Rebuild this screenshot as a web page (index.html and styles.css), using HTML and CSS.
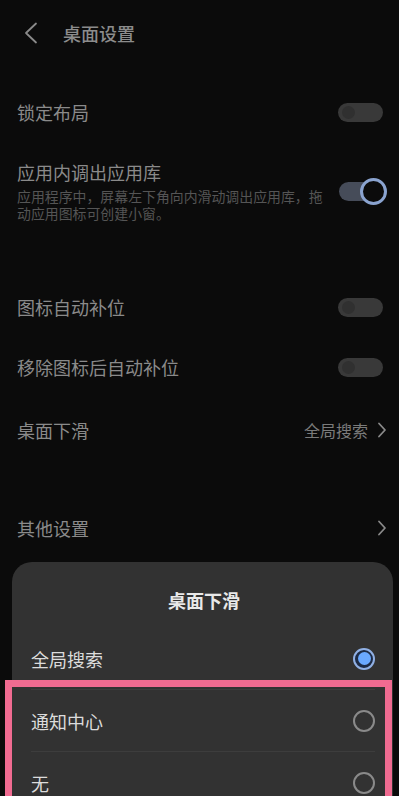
FILE: index.html
```html
<!DOCTYPE html>
<html lang="zh-CN">
<head>
<meta charset="utf-8">
<title>桌面设置</title>
<link rel="stylesheet" href="styles.css">
</head>
<body>
<div class="screen">
  <header class="header">
    <svg class="back" width="14" height="22" viewBox="0 0 14 22"><path d="M12 1.5 L2 11 L12 20.5" fill="none" stroke="#8a8a8a" stroke-width="1.8" stroke-linecap="round" stroke-linejoin="round"/></svg>
    <span class="header-title">桌面设置</span>
  </header>

  <div class="row row-lock">
    <span class="label">锁定布局</span>
    <span class="toggle"><span class="knob"></span></span>
  </div>

  <div class="row row-app">
    <div class="text-block">
      <div class="label">应用内调出应用库</div>
      <div class="desc">应用程序中，屏幕左下角向内滑动调出应用库，拖</div>
      <div class="desc">动应用图标可创建小窗。</div>
    </div>
    <span class="toggle on"><span class="knob"></span></span>
  </div>

  <div class="row row-icon">
    <span class="label">图标自动补位</span>
    <span class="toggle"><span class="knob"></span></span>
  </div>

  <div class="row row-remove">
    <span class="label">移除图标后自动补位</span>
    <span class="toggle"><span class="knob"></span></span>
  </div>

  <div class="row row-swipe">
    <span class="label">桌面下滑</span>
    <span class="value">全局搜索
      <svg class="chev" width="10" height="16" viewBox="0 0 10 16"><path d="M2 1.5 L8 8 L2 14.5" fill="none" stroke="#8a8a8a" stroke-width="1.8" stroke-linecap="round" stroke-linejoin="round"/></svg>
    </span>
  </div>

  <div class="row row-other">
    <span class="label">其他设置</span>
    <svg class="chev" width="10" height="16" viewBox="0 0 10 16"><path d="M2 1.5 L8 8 L2 14.5" fill="none" stroke="#8a8a8a" stroke-width="1.8" stroke-linecap="round" stroke-linejoin="round"/></svg>
  </div>

  <div class="sheet">
    <div class="sheet-title">桌面下滑</div>
    <div class="option">
      <span class="opt-label">全局搜索</span>
      <span class="radio checked"><span class="dot"></span></span>
    </div>
    <div class="divider"></div>
    <div class="option">
      <span class="opt-label">通知中心</span>
      <span class="radio"></span>
    </div>
    <div class="divider"></div>
    <div class="option">
      <span class="opt-label">无</span>
      <span class="radio"></span>
    </div>
  </div>

  <div class="highlight"></div>
</div>
</body>
</html>
```

FILE: styles.css
```css
* { box-sizing: border-box; }
html, body {
  margin: 0;
  padding: 0;
  background: #0b0b0b;
}
body {
  font-family: "Noto Sans CJK SC", "Noto Sans", sans-serif;
}
.screen {
  position: relative;
  width: 399px;
  height: 796px;
  overflow: hidden;
  background: #0b0b0b;
  display: flex;
  flex-direction: column;
}
.header {
  height: 66px;
  display: flex;
  align-items: center;
  padding-left: 24px;
  flex-shrink: 0;
}
.back { display: block; }
.header-title {
  margin-left: 25px;
  font-size: 18px;
  color: #8c8c8c;
  font-weight: 500;
  line-height: 24px;
}
.row {
  display: flex;
  align-items: center;
  justify-content: space-between;
  padding: 0 16px 0 17px;
  height: 60px;
  flex-shrink: 0;
}
.label {
  font-size: 18px;
  line-height: 24px;
  color: #8a8a8a;
}
.row-lock { margin-top: 16px; }
.row-app {
  height: auto;
  margin-top: 18px;
}
.text-block { display: flex; flex-direction: column; }
.desc {
  font-size: 13.9px;
  line-height: 17px;
  color: #555555;
  white-space: nowrap;
}
.label + .desc { margin-top: 4px; }
.row-icon { margin-top: 55px; }
.row-swipe { margin-top: 3px; }
.row-other { margin-top: 38px; }
.toggle {
  position: relative;
  width: 45px;
  height: 19px;
  border-radius: 10px;
  background: #393939;
  flex-shrink: 0;
}
.toggle .knob {
  position: absolute;
  left: 4px;
  top: 3px;
  width: 13px;
  height: 13px;
  border-radius: 50%;
  background: #303030;
}
.toggle.on {
  background: #464c59;
  width: 45px;
  margin-right: -1px;
}
.toggle.on .knob {
  left: auto;
  right: -3px;
  top: -4px;
  width: 27px;
  height: 27px;
  background: #0b0b0b;
  border: 3px solid #8aa3cf;
}
.value {
  display: flex;
  align-items: center;
  font-size: 16px;
  color: #7b7b7b;
  gap: 9px;
  margin-right: -4px;
}
.chev { display: block; }
.row-other .chev { margin-right: -4px; }
.sheet {
  margin: 4px 6px 0 12px;
  flex: 1;
  background: #323232;
  border-radius: 20px 20px 0 0;
  padding: 26px 18px 0 19px;
  display: flex;
  flex-direction: column;
}
.sheet-title {
  text-align: center;
  font-size: 18px;
  font-weight: 700;
  line-height: 24px;
  color: #e8e8e8;
  margin-bottom: 16px;
  padding-left: 2px;
}
.option {
  height: 61px;
  display: flex;
  align-items: center;
  justify-content: space-between;
  flex-shrink: 0;
}
.opt-label {
  font-size: 18px;
  line-height: 24px;
  color: #dcdcdc;
}
.radio {
  width: 22px;
  height: 22px;
  border-radius: 50%;
  border: 2px solid #8a8a8a;
  display: flex;
  align-items: center;
  justify-content: center;
  flex-shrink: 0;
}
.radio.checked {
  border: 2px solid #90b0e4;
  background: #1d2b45;
}
.radio .dot {
  width: 13px;
  height: 13px;
  border-radius: 50%;
  background: #6aa9ff;
}
.divider {
  height: 1px;
  background: #3d3d3d;
  flex-shrink: 0;
}
.highlight {
  position: absolute;
  left: 5px;
  top: 680px;
  width: 387px;
  height: 130px;
  border: 7px solid #f06b91;
}
```
